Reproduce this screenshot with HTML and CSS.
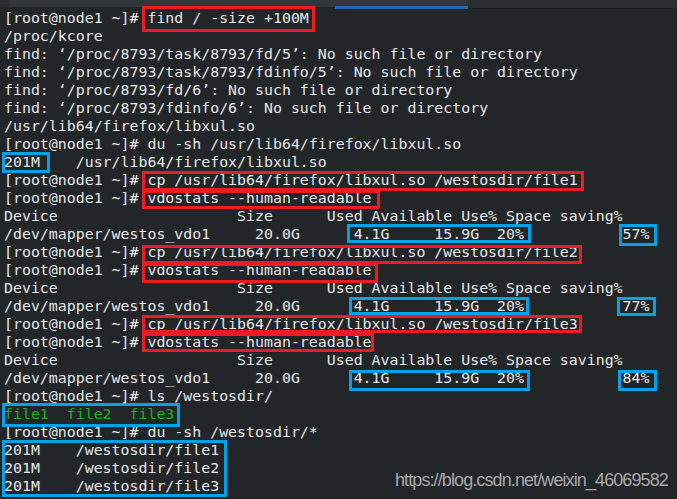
FILE: index.html
```html
<!DOCTYPE html>
<html>
<head>
<meta charset="utf-8">
<link rel="stylesheet" href="styles.css">
</head>
<body>
<div class="window">
  <div class="tabbar">
    <div class="tab-edge"></div>
    <div class="tab-active"><div class="tab-plain"></div><div class="tab-mark"></div></div>
    <div class="tab-rest"></div>
  </div>
<pre class="term">[root@node1 ~]# find / -size +100M
/proc/kcore
find: ‘/proc/8793/task/8793/fd/5’: No such file or directory
find: ‘/proc/8793/task/8793/fdinfo/5’: No such file or directory
find: ‘/proc/8793/fd/6’: No such file or directory
find: ‘/proc/8793/fdinfo/6’: No such file or directory
/usr/lib64/firefox/libxul.so
[root@node1 ~]# du -sh /usr/lib64/firefox/libxul.so
201M    /usr/lib64/firefox/libxul.so
[root@node1 ~]# cp /usr/lib64/firefox/libxul.so /westosdir/file1
[root@node1 ~]# vdostats --human-readable
Device                    Size      Used Available Use% Space saving%
/dev/mapper/westos_vdo1     20.0G      4.1G     15.9G  20%           57%
[root@node1 ~]# cp /usr/lib64/firefox/libxul.so /westosdir/file2
[root@node1 ~]# vdostats --human-readable
Device                    Size      Used Available Use% Space saving%
/dev/mapper/westos_vdo1     20.0G      4.1G     15.9G  20%           77%
[root@node1 ~]# cp /usr/lib64/firefox/libxul.so /westosdir/file3
[root@node1 ~]# vdostats --human-readable
Device                    Size      Used Available Use% Space saving%
/dev/mapper/westos_vdo1     20.0G      4.1G     15.9G  20%           84%
[root@node1 ~]# ls /westosdir/
<span class="green">file1  file2  file3</span>
[root@node1 ~]# du -sh /westosdir/*
201M    /westosdir/file1
201M    /westosdir/file2
201M    /westosdir/file3</pre>

  <div class="mark red" style="left:142px;top:6px;width:173px;height:26px"></div>
  <div class="mark blue" style="left:2px;top:152px;width:48px;height:21px"></div>
  <div class="mark red" style="left:142px;top:171px;width:442px;height:20px"></div>
  <div class="mark red" style="left:142px;top:190px;width:238px;height:19px"></div>
  <div class="mark blue" style="left:347px;top:224px;width:184px;height:19px"></div>
  <div class="mark blue" style="left:619px;top:224px;width:38px;height:22px"></div>
  <div class="mark red" style="left:142px;top:245px;width:440px;height:19px"></div>
  <div class="mark red" style="left:142px;top:263px;width:236px;height:20px"></div>
  <div class="mark blue" style="left:349px;top:297px;width:180px;height:18px"></div>
  <div class="mark blue" style="left:617px;top:297px;width:39px;height:19px"></div>
  <div class="mark red" style="left:142px;top:315px;width:440px;height:18px"></div>
  <div class="mark red" style="left:142px;top:333px;width:232px;height:19px"></div>
  <div class="mark blue" style="left:349px;top:370px;width:181px;height:21px"></div>
  <div class="mark blue" style="left:618px;top:370px;width:39px;height:21px"></div>
  <div class="mark blue" style="left:2px;top:403px;width:178px;height:24px"></div>
  <div class="mark blue" style="left:2px;top:440px;width:225px;height:57px"></div>

  <div class="watermark">https://blog.csdn.net/weixin_46069582</div>
</div>
</body>
</html>
```
FILE: styles.css
```css
html, body {
  margin: 0;
  padding: 0;
  background: #232629;
}
.window {
  position: relative;
  width: 677px;
  height: 499px;
  overflow: hidden;
  background: #232629;
}
.tabbar {
  display: flex;
  height: 9px;
}
.tab-edge {
  width: 10px;
  height: 7px;
  background: #2a2e32;
}
.tab-active {
  width: 458px;
  display: flex;
}
.tab-plain {
  flex: 1;
  height: 7px;
  background: #31363b;
}
.tab-mark {
  width: 133px;
  height: 6px;
  background: #31363b;
  border-bottom: 3px solid #2a64a8;
}
.tab-rest {
  flex: 1;
  height: 8px;
  background: #2a2e32;
  border-bottom: 1px solid #1c1f22;
}
.term {
  margin: 0;
  padding: 0 0 0 4px;
  font-family: "DejaVu Sans Mono", monospace;
  font-size: 14.9px;
  line-height: 18px;
  color: #e6e7e8;
  white-space: pre;
}
.green {
  color: #18b218;
}
.mark {
  position: absolute;
  box-sizing: border-box;
  border: 3px solid;
}
.red {
  border-color: #ed1c24;
}
.blue {
  border-color: #00a2e8;
}
.watermark {
  position: absolute;
  left: 395px;
  top: 471px;
  font-family: "Liberation Sans", Arial, sans-serif;
  font-size: 18px;
  line-height: 18px;
  letter-spacing: -0.9px;
  color: #a8a8a8;
  white-space: nowrap;
}
```
